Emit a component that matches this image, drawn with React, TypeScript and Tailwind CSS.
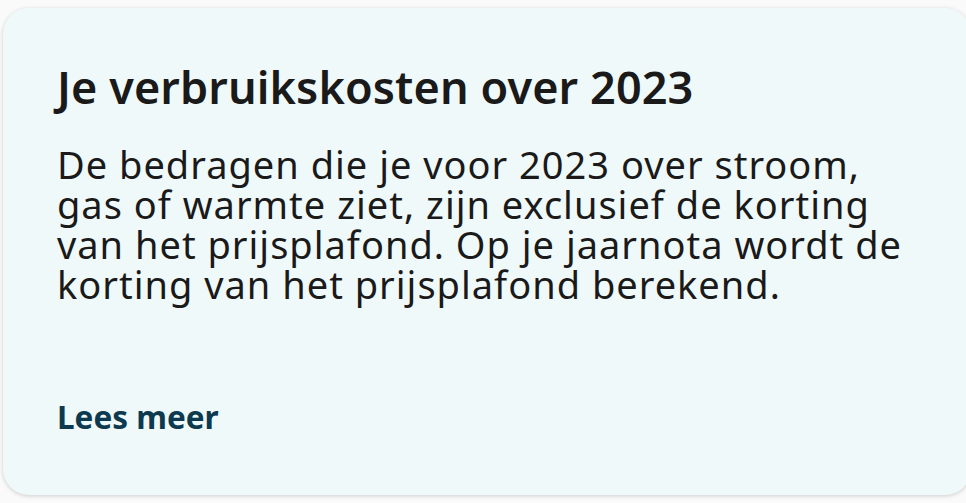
import React from "react";

const App = () => {
  return (
    <div className="w-full h-[503px] overflow-hidden bg-[#fafafa] pt-[8px] pl-[3px]">
      <div
        className="w-[968px] h-[487px] rounded-[26px] bg-[#f0f9f9] shadow-[0_1px_4px_rgba(0,0,0,0.18)] pl-[54px] pt-[51px] text-[#1a1a1a]"
        style={{ fontFamily: '"Noto Sans", "Open Sans", sans-serif' }}
      >
        <h2 className="text-[45px] font-semibold leading-[56px] tracking-[0.1px]">
          Je verbruikskosten over 2023
        </h2>
        <p className="mt-[29px] w-[900px] text-[38px] leading-[40px] tracking-[1px]">
          De bedragen die je voor 2023 over stroom,
          <br />
          gas of warmte ziet, zijn exclusief de korting
          <br />
          van het prijsplafond. Op je jaarnota wordt de
          <br />
          korting van het prijsplafond berekend.
        </p>
        <a className="mt-[95px] block text-[31.5px] font-bold leading-[36px] text-[#0d3a4e]">
          Lees meer
        </a>
      </div>
    </div>
  );
};

export default App;
